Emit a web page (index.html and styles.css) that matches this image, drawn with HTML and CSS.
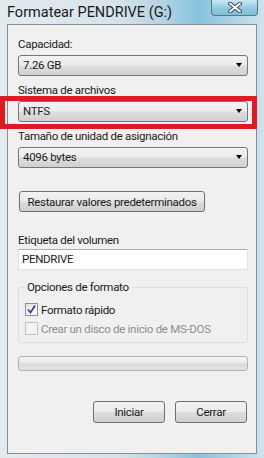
FILE: index.html
```html
<!DOCTYPE html>
<html lang="es">
<head>
    <meta charset="UTF-8">
    <meta name="viewport" content="width=device-width, initial-scale=1.0">
    <title>Formatear PENDRIVE (G:)</title>
    <link rel="stylesheet" href="styles.css">
</head>
<body>
    <div class="window">
        <!-- Barra de título -->
        <div class="titlebar">
            <span class="title">Formatear PENDRIVE (G:)</span>
            <div class="close">
                <svg width="14" height="11" viewBox="0 0 14 11">
                    <path d="M2 1.5 L12 9.5 M12 1.5 L2 9.5" stroke="#3b4a56" stroke-width="4" stroke-linecap="round"/>
                    <path d="M2 1.5 L12 9.5 M12 1.5 L2 9.5" stroke="#fff" stroke-width="2" stroke-linecap="round"/>
                </svg>
            </div>
        </div>

        <div class="client">
            <label class="lbl">Capacidad:</label>
            <div class="combo">7.26 GB<span class="arrow"></span></div>

            <label class="lbl">Sistema de archivos</label>
            <div class="combo">NTFS<span class="arrow"></span></div>

            <label class="lbl">Tamaño de unidad de asignación</label>
            <div class="combo">4096 bytes<span class="arrow"></span></div>

            <button class="btn restore">Restaurar valores predeterminados</button>

            <label class="lbl label-vol">Etiqueta del volumen</label>
            <div class="textbox">PENDRIVE</div>

            <fieldset class="group">
                <legend>Opciones de formato</legend>
                <div class="check-row">
                    <span class="check checked">
                        <svg width="11" height="11" viewBox="0 0 11 11">
                            <path d="M2 5.5 L4.5 8.5 L9 1.5" fill="none" stroke="#2c4e86" stroke-width="1.8"/>
                        </svg>
                    </span>
                    <span>Formato rápido</span>
                </div>
                <div class="check-row disabled">
                    <span class="check"></span>
                    <span>Crear un disco de inicio de MS-DOS</span>
                </div>
            </fieldset>

            <div class="progress"></div>

            <div class="actions">
                <button class="btn action">Iniciar</button>
                <button class="btn action">Cerrar</button>
            </div>
        </div>

        <!-- Marca roja sobre el sistema de archivos -->
        <div class="highlight"></div>
    </div>
</body>
</html>
```

FILE: styles.css
```css
body { margin: 0; font-family: Roboto, "Noto Sans", sans-serif; font-size: 11.5px; letter-spacing: -0.3px; color: #1a1a1a; }
.window { position: relative; width: 264px; height: 458px; overflow: hidden;
    background: linear-gradient(90deg, #e3ebf0 0%, #d6e2ea 45%, #b3d3e4 62%, #86c3de 75%, #cfe3ed 100%); }
.titlebar { height: 24px; display: flex; justify-content: space-between; align-items: flex-start; }
.title { font-size: 14.5px; letter-spacing: 0; line-height: 18px; padding: 4px 0 0 7px; color: #1b1b1b; }
.close { width: 45px; height: 15px; margin-right: 6px; display: flex; align-items: center; justify-content: center;
    border: 1px solid #5c7585; border-top: none; border-radius: 0 0 4px 4px;
    background: linear-gradient(#c9e8f2, #8fcbe0 55%, #7cc0d8); }
.client { height: 430px; box-sizing: border-box; margin: 0 7px; padding: 11px 8px 0 10px;
    background: #f0f0f0; border: 1px solid #858f96; display: flex; flex-direction: column; align-items: flex-start; }
.lbl { display: block; line-height: 16px; margin-bottom: 3px; }
.combo { position: relative; width: 230px; height: 21px; box-sizing: border-box; margin-bottom: 6px;
    padding-left: 4px; line-height: 19px; border: 1px solid #767676; border-radius: 3px;
    background: linear-gradient(#f3f3f3 0%, #ebebeb 48%, #dddddd 52%, #d1d1d1 100%); }
.arrow { position: absolute; right: 5px; top: 7px; width: 0; height: 0;
    border-left: 3.5px solid transparent; border-right: 3.5px solid transparent; border-top: 4px solid #000; }
.btn { font-family: inherit; font-size: 11.5px; letter-spacing: -0.3px; color: #1a1a1a; height: 21px; box-sizing: border-box; padding: 0;
    white-space: nowrap; border: 1px solid #707070; border-radius: 3px;
    background: linear-gradient(#f2f2f2 0%, #ebebeb 48%, #dddddd 52%, #cfcfcf 100%); }
.restore { width: 186px; margin: 17px 0 0 1px; }
.label-vol { margin-top: 20px; margin-bottom: 1px; }
.textbox { width: 230px; height: 21px; box-sizing: border-box; padding-left: 3px; line-height: 19px;
    background: #fff; border: 1px solid #e2e3ea; border-top-color: #abadb3; }
.group { width: 230px; box-sizing: border-box; margin: 9px 0 0 0; padding: 5px 6px 4px 6px;
    border: 1px solid #d5dfe5; border-radius: 3px; }
.group legend { padding: 0 2px; line-height: 16px; }
.check-row { display: flex; align-items: center; height: 19px; gap: 3px; }
.check { width: 13px; height: 13px; box-sizing: border-box; border: 1px solid #8f8f8f;
    background: linear-gradient(135deg, #e2e2e2, #fdfdfd); display: flex; align-items: center; justify-content: center; }
.disabled { color: #8d8d8d; }
.disabled .check { border-color: #c3c3c3; background: #f4f4f4; }
.progress { width: 230px; height: 15px; box-sizing: border-box; margin-top: 13px;
    border: 1px solid #b2b2b2; border-radius: 3px;
    background: linear-gradient(#f6f6f6 0%, #e9e9e9 45%, #d9d9d9 55%, #e4e4e4 100%); }
.actions { display: flex; gap: 10px; align-self: stretch; justify-content: flex-end; padding-right: 1px; margin-top: 30px; }
.action { width: 72px; height: 22px; }
.highlight { position: absolute; left: 0; top: 96px; width: 257px; height: 33px; box-sizing: border-box;
    border: 5px solid #dc1b24; }
```
